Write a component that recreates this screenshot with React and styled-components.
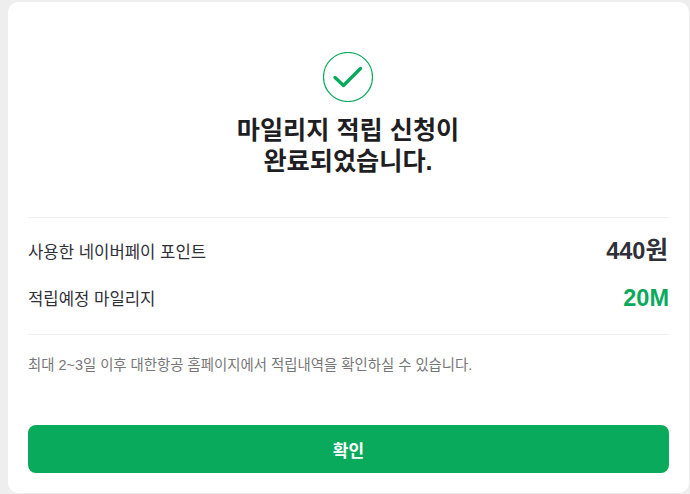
import React from 'react';
import styled, { createGlobalStyle } from 'styled-components';

const Global = createGlobalStyle`
  html, body { margin: 0; padding: 0; background: #eeeeee; }
  body { font-family: "Liberation Sans", "Noto Sans CJK KR", sans-serif; }
  * { box-sizing: border-box; }
`;
const Page = styled.div`
  width: 690px; height: 494px; overflow: hidden; padding: 2px 1px 1px 8px;
`;
const Card = styled.main`
  height: 491px; background: #fff; border-radius: 10px;
  padding: 50px 20px 20px; display: flex; flex-direction: column;
`;
const Head = styled.header`
  display: flex; flex-direction: column; align-items: center; gap: 13px;
  padding: 0 1px 40px 0; border-bottom: 1px solid #f0f0f0;
`;
const Title = styled.h1`
  margin: 0; font-size: 25.2px; line-height: 31px; font-weight: 700; color: #1e1e23; text-align: center;
`;
const Rows = styled.dl`
  margin: 0; padding: 15px 0 18px; display: flex; flex-direction: column; gap: 11px;
  border-bottom: 1px solid #f0f0f0;
`;
const Row = styled.div`
  display: flex; justify-content: space-between; align-items: center; height: 36px;
`;
const Label = styled.dt`font-size: 16.7px; color: #303038;`;
const Value = styled.dd`
  margin: 0; font-size: 23.5px; line-height: 36px; font-weight: 700; color: ${p => p.$green ? '#09aa5c' : '#303038'};
`;
const Unit = styled.span`font-size: 24.5px; margin-right: 1px;`;
const Note = styled.p`
  margin: 20px 0 0; font-size: 14.4px; line-height: 20px; color: #767678;
`;
const Confirm = styled.button`
  margin-top: auto; height: 48px; border: 0; border-radius: 8px; background: #09aa5c; color: #fff;
  font: 700 17px "Liberation Sans", "Noto Sans CJK KR", sans-serif;
`;

export default function App() {
  return (
    <Page>
      <Global />
      <Card>
        <Head>
          <svg width="50" height="50" viewBox="0 0 50 50" fill="none" stroke="#09aa5c" strokeLinecap="round" strokeLinejoin="round">
            <circle cx="25" cy="25" r="24.5" strokeWidth="1.2" />
            <path d="M12 25.5 L20.5 33.5 L37.5 16.5" strokeWidth="3.4" />
          </svg>
          <Title>마일리지 적립 신청이<br />완료되었습니다.</Title>
        </Head>
        <Rows>
          <Row><Label>사용한 네이버페이 포인트</Label><Value>440<Unit>원</Unit></Value></Row>
          <Row><Label>적립예정 마일리지</Label><Value $green>20M</Value></Row>
        </Rows>
        <Note>최대 2~3일 이후 대한항공 홈페이지에서 적립내역을 확인하실 수 있습니다.</Note>
        <Confirm>확인</Confirm>
      </Card>
    </Page>
  );
}
